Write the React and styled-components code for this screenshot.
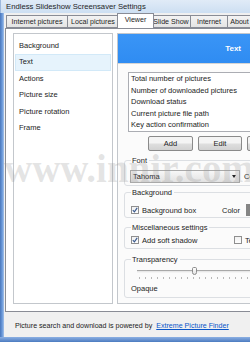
import React from "react";
import styled, { createGlobalStyle } from "styled-components";

const UI = `"Liberation Sans", Arial, sans-serif`;

const GlobalStyle = createGlobalStyle`
  html, body { margin: 0; padding: 0; background: #fff; }
  body { font-family: ${UI}; font-size: 7.5px; color: #1c1c1c; }
  * { box-sizing: border-box; }
`;

const Window = styled.div`
  position: relative;
  width: 250px;
  height: 342px;
  overflow: hidden;
  display: flex;
  flex-direction: column;
  background: #cfdff2;
`;

const TitleBar = styled.div`
  height: 13px;
  line-height: 13px;
  padding-left: 5px;
  background: linear-gradient(#e0ebf7, #cddff2);
  border-left: 1px solid #9db9de;
  color: #1e1e1e;
  font-size: 7.7px;
  white-space: nowrap;
`;

const Frame = styled.div`
  flex: 1;
  display: flex;
  min-height: 0;
`;

const SideFrame = styled.div`
  width: 4px;
  background: linear-gradient(90deg, #4a77bb, #6a99da 55%, #a6c2e8);
`;

const Client = styled.div`
  flex: 1;
  min-width: 0;
  display: flex;
  flex-direction: column;
  background: #f0f0f0;
  overflow: hidden;
`;

const BottomFrame = styled.div`
  height: 5px;
  background: linear-gradient(#8cb0e3, #4c7bc0);
`;

const TabsRow = styled.div`
  height: 15px;
  display: flex;
  align-items: flex-end;
  padding-left: 2px;
  white-space: nowrap;
  font-size: 7.1px;
`;

const Tab = styled.div`
  position: relative;
  flex-shrink: 0;
  width: ${(p) => p.$w}px;
  height: ${(p) => (p.$active ? 15 : 13)}px;
  margin: 0 ${(p) => (p.$active ? -2 : 0)}px;
  z-index: ${(p) => (p.$active ? 2 : 1)};
  border: 1px solid #898c95;
  border-bottom: ${(p) => (p.$active ? "none" : "1px solid #898c95")};
  border-left-width: ${(p) => (p.$first || p.$active ? 1 : 0)}px;
  background: ${(p) =>
    p.$active ? "#fff" : "linear-gradient(#f3f3f3, #e4e4e4)"};
  display: flex;
  align-items: ${(p) => (p.$active ? "flex-start" : "center")};
  padding-top: ${(p) => (p.$active ? 2 : 0)}px;
  justify-content: center;
  color: #1e1e1e;
`;

const TabPanel = styled.div`
  margin-left: 1px;
  width: 270px;
  height: 284px;
  border: 1px solid #898c95;
  background: #fff;
  display: flex;
  gap: 4px;
  align-items: flex-start;
  padding: 4px 0 0 7px;
`;

const ListPanel = styled.div`
  width: 100px;
  height: 271px;
  flex-shrink: 0;
  border: 1px solid #c3c7cc;
  background: #fff;
  padding-top: 4px;
`;

const ListItem = styled.div`
  height: 16.4px;
  line-height: 16.4px;
  margin: 0 1px;
  padding-left: 4px;
  background: ${(p) => (p.$selected ? "#e6f3fc" : "transparent")};
  box-shadow: ${(p) => (p.$selected ? "inset 0 0 0 1px #d2e9f8" : "none")};
`;

const RightPanel = styled.div`
  width: 150px;
  height: 271px;
  flex-shrink: 0;
  border: 1px solid #c3c7cc;
  background: #fbfbfb;
  display: flex;
  flex-direction: column;
`;

const Header = styled.div`
  height: 30px;
  background: linear-gradient(#3a95f6, #2f8cf2);
  border-bottom: 1px solid #d4d4d4;
  color: #fff;
  font-weight: bold;
  font-size: 8px;
  display: flex;
  align-items: center;
  justify-content: flex-end;
  padding-right: 25px;
`;

const Content = styled.div`
  display: flex;
  flex-direction: column;
  padding-left: 6px;
`;

const ListBox = styled.div`
  margin: 8px 0 0 4px;
  height: 60px;
  border: 1px solid #abadb3;
  background: #fff;
`;

const ListRow = styled.div`
  height: 11.6px;
  line-height: 11.6px;
  padding-left: 2px;
  white-space: nowrap;
`;

const ButtonRow = styled.div`
  margin-top: 4px;
  height: 15px;
  display: flex;
  gap: 5px;
  padding-left: 24px;
`;

const Button = styled.div`
  width: ${(p) => p.$w}px;
  flex-shrink: 0;
  height: 15px;
  border: 1px solid #8a8a8a;
  border-radius: 2px;
  background: linear-gradient(#f4f4f4 45%, #dedede 55%, #d2d2d2);
  display: flex;
  align-items: center;
  justify-content: center;
  color: #1e1e1e;
`;

const Group = styled.fieldset`
  margin: ${(p) => p.$top}px 0 0 0;
  padding: 0 6px ${(p) => p.$bottom}px 6px;
  border: 1px solid #dcdfe3;
  border-radius: 3px;
  min-width: 0;
`;

const Legend = styled.legend`
  padding: 0 2px 0 1px;
  line-height: 9px;
  color: #1e1e1e;
`;

const SelectRow = styled.div`
  margin-top: 5px;
  display: flex;
  align-items: center;
  gap: 4px;
`;

const Select = styled.div`
  margin-left: -1px;
  width: 110px;
  flex-shrink: 0;
  height: 13px;
  border: 1px solid #a9a9a9;
  background: linear-gradient(#f7f7f7, #e2e2e2);
  display: flex;
  align-items: center;
  justify-content: space-between;
  padding: 0 3px 0 2px;
`;

const Arrow = styled.span`
  width: 0;
  height: 0;
  border-left: 2.5px solid transparent;
  border-right: 2.5px solid transparent;
  border-top: 3px solid #222;
`;

const Row = styled.div`
  margin-top: ${(p) => p.$top}px;
  height: 10px;
  display: grid;
  grid-template-columns: ${(p) => p.$col}px auto;
  align-items: center;
  white-space: nowrap;
`;

const Check = styled.label`
  display: flex;
  align-items: center;
  gap: 3px;
`;

const Box = styled.span`
  width: 8px;
  height: 8px;
  border: 1px solid #8f8f8f;
  background: linear-gradient(#f1f1f1, #fdfdfd);
  display: flex;
  align-items: center;
  justify-content: center;
`;

const Tick = () => (
  <svg width="6" height="6" viewBox="0 0 6 6">
    <path d="M0.8 3.2 L2.4 4.8 L5.2 0.8" fill="none" stroke="#3b5b8f" strokeWidth="1.2" />
  </svg>
);

const ColorPick = styled.div`
  display: flex;
  align-items: center;
  gap: 6px;
`;

const Swatch = styled.span`
  width: 12px;
  height: 12px;
  background: #858585;
`;

const SliderTrack = styled.div`
  position: relative;
  margin: 6px 0 0 6px;
  height: 3px;
  border-top: 1px solid #a8a8a8;
  background: #e8e8e8;
  border-bottom: 1px solid #f4f4f4;
`;

const Thumb = styled.span`
  position: absolute;
  left: 55px;
  top: -4px;
  width: 5px;
  height: 8px;
  border: 1px solid #8c8c8c;
  border-radius: 2px 2px 3px 3px;
  background: linear-gradient(#fff, #e2e2e2);
`;

const Ticks = styled.div`
  margin: 4px 0 0 8px;
  height: 2px;
  background: repeating-linear-gradient(90deg, #b8b8b8 0 1px, transparent 1px 6px);
`;

const Caption = styled.div`
  margin-top: 5px;
  line-height: 9px;
`;

const Footer = styled.div`
  height: 25px;
  display: flex;
  align-items: center;
  padding: 3px 0 0 11px;
  white-space: nowrap;
  font-size: 7.1px;
`;

const Link = styled.a`
  margin-left: 4px;
  color: #0a56c9;
  text-decoration: underline;
`;

const Watermark = styled.div`
  position: absolute;
  left: 4px;
  top: 146px;
  font-family: "Liberation Serif", "Times New Roman", serif;
  font-weight: bold;
  font-size: 39px;
  color: rgba(150, 150, 150, 0.26);
  pointer-events: none;
  white-space: nowrap;
`;

const tabs = [
  { label: "Internet pictures", w: 62 },
  { label: "Local pictures", w: 51 },
  { label: "Viewer", w: 37, active: true },
  { label: "Slide Show", w: 39 },
  { label: "Internet", w: 37 },
  { label: "About", w: 24 },
];

const sections = ["Background", "Text", "Actions", "Picture size", "Picture rotation", "Frame"];

const items = [
  "Total number of pictures",
  "Number of downloaded pictures",
  "Download status",
  "Current picture file path",
  "Key action confirmation",
];

export default function App() {
  return (
    <>
      <GlobalStyle />
      <Window>
        <TitleBar>Endless Slideshow Screensaver Settings</TitleBar>
        <Frame>
          <SideFrame />
          <Client>
            <TabsRow>
              {tabs.map((t, i) => (
                <Tab key={t.label} $w={t.w} $active={t.active} $first={i === 0}>
                  {t.label}
                </Tab>
              ))}
            </TabsRow>
            <TabPanel>
              <ListPanel>
                {sections.map((s) => (
                  <ListItem key={s} $selected={s === "Text"}>
                    {s}
                  </ListItem>
                ))}
              </ListPanel>
              <RightPanel>
                <Header>Text</Header>
                <Content>
                  <ListBox>
                    {items.map((it) => (
                      <ListRow key={it}>{it}</ListRow>
                    ))}
                  </ListBox>
                  <ButtonRow>
                    <Button $w={45}>Add</Button>
                    <Button $w={44}>Edit</Button>
                    <Button $w={44}>Delete</Button>
                  </ButtonRow>
                  <Group $top={5} $bottom={2}>
                    <Legend>Font</Legend>
                    <SelectRow>
                      <Select>
                        <span>Tahoma</span>
                        <Arrow />
                      </Select>
                      <span>Color</span>
                    </SelectRow>
                  </Group>
                  <Group $top={2} $bottom={3}>
                    <Legend>Background</Legend>
                    <Row $top={7} $col={91}>
                      <Check>
                        <Box><Tick /></Box>
                        Background box
                      </Check>
                      <ColorPick>
                        Color <Swatch />
                      </ColorPick>
                    </Row>
                  </Group>
                  <Group $top={5} $bottom={3}>
                    <Legend>Miscellaneous settings</Legend>
                    <Row $top={3} $col={103}>
                      <Check>
                        <Box><Tick /></Box>
                        Add soft shadow
                      </Check>
                      <Check>
                        <Box />
                        Text outline
                      </Check>
                    </Row>
                  </Group>
                  <Group $top={6} $bottom={4}>
                    <Legend>Transparency</Legend>
                    <SliderTrack>
                      <Thumb />
                    </SliderTrack>
                    <Ticks />
                    <Caption>Opaque</Caption>
                  </Group>
                </Content>
              </RightPanel>
            </TabPanel>
            <Footer>
              Picture search and download is powered by
              <Link>Extreme Picture Finder</Link>
            </Footer>
          </Client>
        </Frame>
        <BottomFrame />
        <Watermark>www.innir.com</Watermark>
      </Window>
    </>
  );
}
